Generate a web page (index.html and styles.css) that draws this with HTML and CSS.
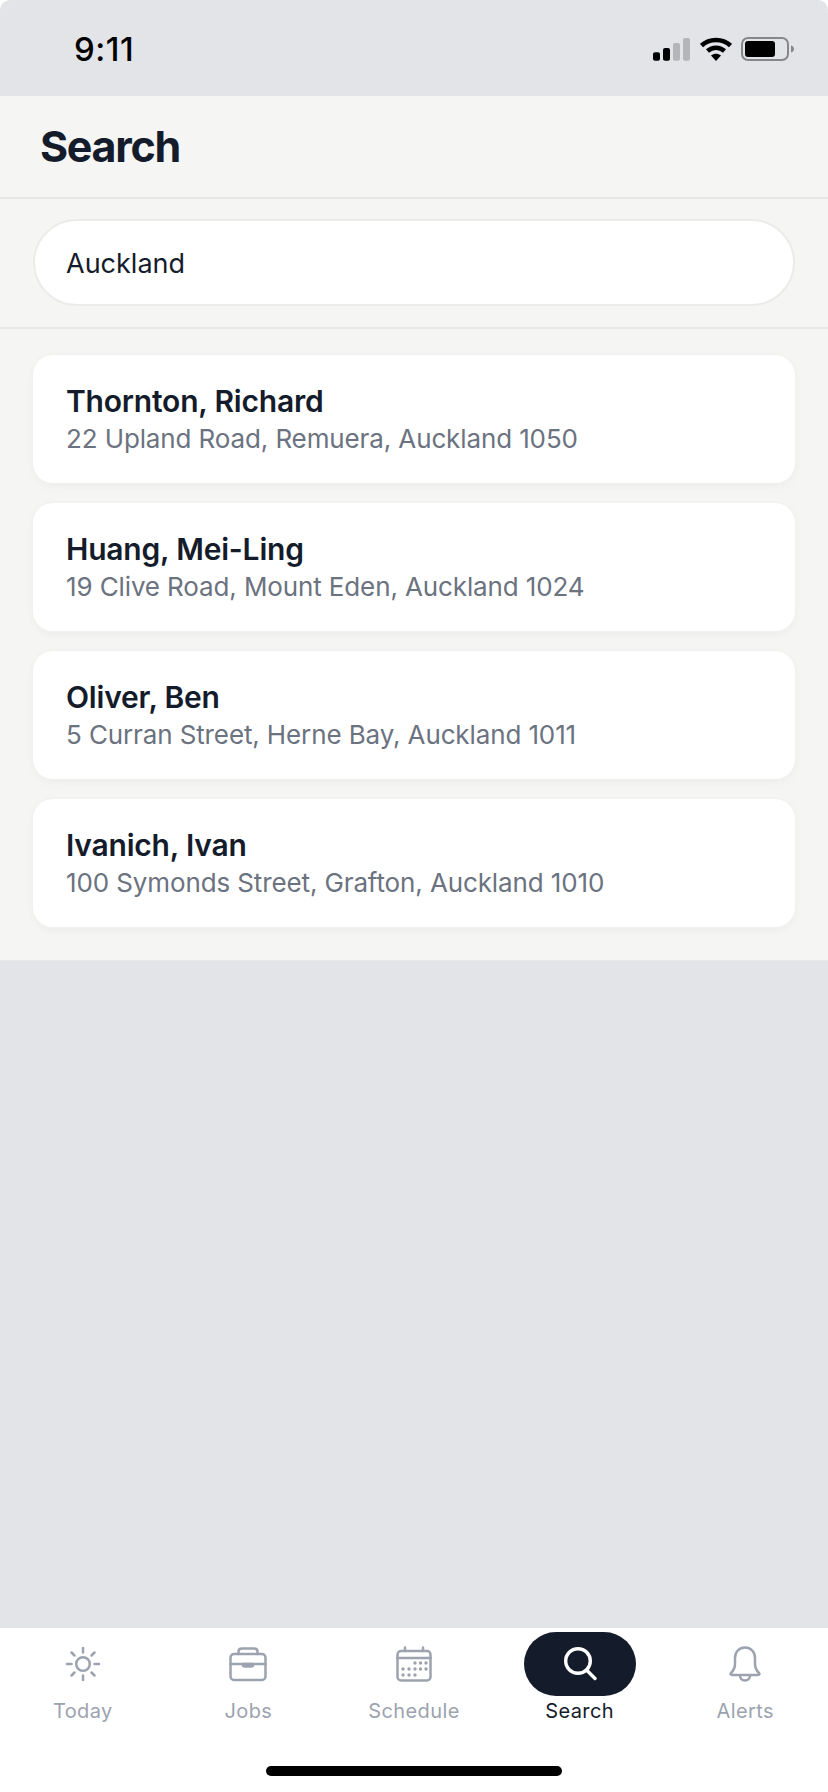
FILE: index.html
```html
<!DOCTYPE html>
<html lang="en">
<head>
    <meta charset="UTF-8">
    <meta name="viewport" content="width=device-width, initial-scale=1.0">
    <title>Search</title>
    <link rel="stylesheet" href="styles.css">
</head>
<body>

<div class="app">
    <!-- Status bar -->
    <div class="statusBar">
        <span class="time">9:11</span>
        <div class="statusIcons">
            <svg width="38" height="26" viewBox="0 0 38 26">
                <rect x="0" y="16.300" width="7" height="8.400" rx="2" fill="#000"/>
                <rect x="10" y="12" width="7" height="12.700" rx="2" fill="#000"/>
                <rect x="20" y="7" width="7" height="17.700" rx="2" fill="#b4b5b9"/>
                <rect x="30" y="2" width="7" height="22.700" rx="2" fill="#b4b5b9"/>
            </svg>
            <svg width="32" height="26" viewBox="1 0 32 26">
                <path d="M2.500 9.500C10.500 2 23.500 2 31.500 9.500" fill="none" stroke="#000" stroke-width="4.500"/>
                <path d="M8.500 15C13.500 10.500 20.500 10.500 25.500 15" fill="none" stroke="#000" stroke-width="4.500"/>
                <path d="M12 19.500C15 17 19 17 22 19.500L17 25Z" fill="#000"/>
            </svg>
            <svg width="54" height="26" viewBox="0 0 54 26">
                <rect x="1" y="2" width="46" height="22" rx="6" fill="none" stroke="#86878b" stroke-width="2"/>
                <rect x="4" y="5" width="30" height="16" rx="3" fill="#000"/>
                <path d="M50 9.500C52 10 53 11.500 53 13C53 14.500 52 16 50 16.500Z" fill="#86878b"/>
            </svg>
        </div>
    </div>

    <!-- Search panel -->
    <div class="panel">
        <div class="pageHeader">
            <h1>Search</h1>
        </div>

        <div class="searchBox">
            <div class="searchInput">Auckland</div>
        </div>

        <div class="results">
            <div class="card">
                <p class="name">Thornton, Richard</p>
                <p class="address">22 Upland Road, Remuera, Auckland 1050</p>
            </div>
            <div class="card">
                <p class="name">Huang, Mei-Ling</p>
                <p class="address">19 Clive Road, Mount Eden, Auckland 1024</p>
            </div>
            <div class="card">
                <p class="name">Oliver, Ben</p>
                <p class="address">5 Curran Street, Herne Bay, Auckland 1011</p>
            </div>
            <div class="card">
                <p class="name">Ivanich, Ivan</p>
                <p class="address">100 Symonds Street, Grafton, Auckland 1010</p>
            </div>
        </div>
    </div>

    <!-- Tab bar -->
    <div class="tabBar">
        <div class="tabs">
            <div class="tab">
                <div class="tabIcon">
                    <svg width="36" height="36" viewBox="0 0 36 36" fill="none" stroke="#9ca3af" stroke-width="2.500" stroke-linecap="round">
                        <circle cx="18" cy="18" r="6.800"/>
                        <path d="M18 2V6.500M18 29.500V34M2 18H6.500M29.500 18H34M6.500 6.500L9.500 9.500M26.500 26.500L29.500 29.500M6.500 29.500L9.500 26.500M26.500 9.500L29.500 6.500"/>
                    </svg>
                </div>
                <span>Today</span>
            </div>
            <div class="tab">
                <div class="tabIcon">
                    <svg width="38" height="36" viewBox="0 0 38 36" fill="none" stroke="#9ca3af" stroke-width="2.500" stroke-linecap="round" stroke-linejoin="round">
                        <rect x="1.500" y="8" width="35" height="26" rx="3.500"/>
                        <path d="M9.500 8V5.500C9.500 3.500 11 2.500 13 2.500H25C27 2.500 28.500 3.500 28.500 5.500V8"/>
                        <path d="M1.500 18H36.500"/>
                        <path d="M14 18V19C14 20 15 20.500 16 20.500H22C23 20.500 24 20 24 19V18Z" fill="#9ca3af"/>
                    </svg>
                </div>
                <span>Jobs</span>
            </div>
            <div class="tab">
                <div class="tabIcon">
                    <svg width="36" height="36" viewBox="0 0 36 36" fill="none" stroke="#9ca3af" stroke-width="2.500" stroke-linecap="round" stroke-linejoin="round">
                        <rect x="1.500" y="5" width="33" height="29.500" rx="3.500"/>
                        <path d="M9 1.500V5M27 1.500V5M1.500 12H34.500"/>
                        <g fill="#9ca3af" stroke="none">
                            <circle cx="19" cy="17" r="1.700"/><circle cx="24.500" cy="17" r="1.700"/><circle cx="30" cy="17" r="1.700"/>
                            <circle cx="7" cy="23" r="1.700"/><circle cx="13" cy="23" r="1.700"/><circle cx="19" cy="23" r="1.700"/><circle cx="24.500" cy="23" r="1.700"/><circle cx="30" cy="23" r="1.700"/>
                            <circle cx="7" cy="29" r="1.700"/><circle cx="13" cy="29" r="1.700"/><circle cx="19" cy="29" r="1.700"/>
                        </g>
                    </svg>
                </div>
                <span>Schedule</span>
            </div>
            <div class="tab active">
                <div class="tabIcon">
                    <svg width="34" height="34" viewBox="0 0 34 34" fill="none" stroke="#fff" stroke-width="3.400" stroke-linecap="round">
                        <circle cx="15" cy="14" r="12.300"/>
                        <path d="M23.500 23L32 31.500"/>
                    </svg>
                </div>
                <span>Search</span>
            </div>
            <div class="tab">
                <div class="tabIcon">
                    <svg width="32" height="36" viewBox="0 0 32 36" fill="none" stroke="#9ca3af" stroke-width="2.500" stroke-linecap="round" stroke-linejoin="round">
                        <path d="M16 1.500C10 1.500 6 6 6 12V18C6 22 4 25 2 27C1.200 28 1.500 29 3 29H29C30.500 29 30.800 28 30 27C28 25 26 22 26 18V12C26 6 22 1.500 16 1.500Z"/>
                        <path d="M11 29.500C11 32.500 13 34.500 16 34.500C19 34.500 21 32.500 21 29.500"/>
                    </svg>
                </div>
                <span>Alerts</span>
            </div>
        </div>
        <div class="homeIndicator"></div>
    </div>
</div>

</body>
</html>
```

FILE: styles.css
```css
* {
    box-sizing: border-box;
}

body {
    margin: 0;
    font-family: Inter, "Liberation Sans", sans-serif;
    color: #141c2b;
    background-color: #fff;
}

p, h1 {
    margin: 0;
}

.app {
    display: flex;
    flex-direction: column;
    height: 1792px;
    overflow: hidden;
    background-color: #e3e4e8;
    border-radius: 10px 10px 0 0;
}

/* Status bar */
.statusBar {
    height: 96px;
    flex-shrink: 0;
    display: flex;
    justify-content: space-between;
    align-items: center;
    padding: 2px 33px 0 74px;
}

.time {
    font-size: 33px;
    font-weight: 500;
    color: #000;
    letter-spacing: 0.5px;
}

.statusIcons {
    display: flex;
    align-items: center;
    gap: 9px;
}

/* Search panel */
.panel {
    background-color: #f5f5f3;
    border-bottom: 1px solid #e8e8e6;
}

.pageHeader {
    height: 103px;
    padding-left: 40px;
    display: flex;
    align-items: center;
    border-bottom: 2px solid #e6e6e4;
}

h1 {
    font-size: 43px;
    font-weight: 700;
    letter-spacing: -1.300px;
    padding-bottom: 2px;
}

.searchBox {
    height: 130px;
    padding: 20px 33px 0;
    border-bottom: 2px solid #e6e6e4;
}

.searchInput {
    height: 87px;
    padding: 2px 0 0 31px;
    display: flex;
    align-items: center;
    background-color: #fff;
    border: 2px solid #ebebe9;
    border-radius: 44px;
    font-size: 27px;
}

.results {
    display: flex;
    flex-direction: column;
    gap: 20px;
    padding: 26px 33px 33px;
}

.card {
    height: 128px;
    padding: 28px 33px 0;
    background-color: #fff;
    border-radius: 20px;
    box-shadow: 0 0 0 1px #f1f1ef, 0 3px 10px rgba(0, 0, 0, 0.04);
}

.name {
    font-size: 30px;
    font-weight: 600;
    line-height: 36px;
    letter-spacing: -0.200px;
}

.address {
    font-size: 26px;
    line-height: 40px;
    color: #6b7280;
    letter-spacing: -0.120px;
}

/* Tab bar */
.tabBar {
    margin-top: auto;
    height: 164px;
    flex-shrink: 0;
    background-color: #fff;
}

.tabs {
    display: grid;
    grid-template-columns: repeat(5, 1fr);
    padding-top: 4px;
}

.tab {
    display: flex;
    flex-direction: column;
    align-items: center;
    font-size: 20px;
    letter-spacing: 0.400px;
    color: #9ca3af;
}

.tabIcon {
    width: 112px;
    height: 64px;
    margin-bottom: 3px;
    display: flex;
    align-items: center;
    justify-content: center;
    border-radius: 32px;
}

.tab.active {
    color: #141c2b;
}

.tab.active .tabIcon {
    background-color: #141c2b;
}

.homeIndicator {
    width: 296px;
    height: 10px;
    margin: 43px auto 0;
    background-color: #000;
    border-radius: 5px;
}
```
